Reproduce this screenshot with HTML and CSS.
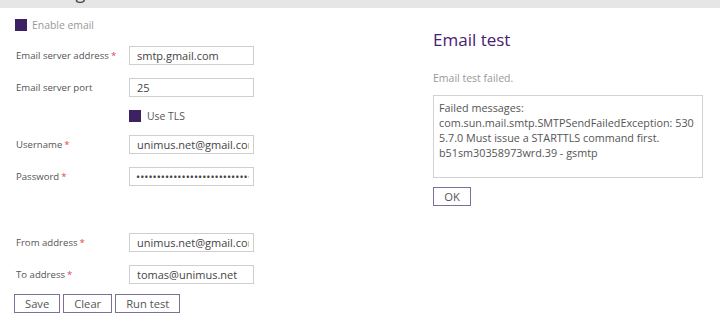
FILE: index.html
```html
<!DOCTYPE html>
<html lang="en">
<head>
  <meta charset="UTF-8" />
  <meta name="viewport" content="width=device-width, initial-scale=1.0" />
  <title>Email settings</title>
  <link rel="stylesheet" href="styles.css">
</head>
<body>
  <div class="topbar">
    <span class="page-title">Settings</span>
  </div>

  <div class="container">
    <div class="settings">
      <div class="check-row enable">
        <span class="checkbox"></span>
        <span class="check-label muted">Enable email</span>
      </div>

      <div class="field">
        <label for="server">Email server address<span class="req">*</span></label>
        <input id="server" type="text" value="smtp.gmail.com" />
      </div>
      <div class="field">
        <label for="port">Email server port</label>
        <input id="port" type="text" value="25" />
      </div>
      <div class="check-row tls">
        <span class="checkbox"></span>
        <span class="check-label">Use TLS</span>
      </div>
      <div class="field">
        <label for="username">Username<span class="req">*</span></label>
        <input id="username" type="text" value="unimus.net@gmail.com" />
      </div>
      <div class="field">
        <label for="password">Password<span class="req">*</span></label>
        <input id="password" type="password" value="abcdefghijklmnopqrstuvwxyzabcdefghijklmn" />
      </div>

      <div class="spacer"></div>

      <div class="field">
        <label for="from">From address<span class="req">*</span></label>
        <input id="from" type="text" value="unimus.net@gmail.com" />
      </div>
      <div class="field">
        <label for="to">To address<span class="req">*</span></label>
        <input id="to" type="text" value="tomas@unimus.net" />
      </div>

      <div class="buttons">
        <button>Save</button>
        <button>Clear</button>
        <button>Run test</button>
      </div>
    </div>

    <div class="test">
      <h2>Email test</h2>
      <p class="muted status">Email test failed.</p>
      <div class="log">Failed messages:
com.sun.mail.smtp.SMTPSendFailedException: 530
5.7.0 Must issue a STARTTLS command first.
b51sm30358973wrd.39 - gsmtp</div>
      <button class="ok">OK</button>
    </div>
  </div>
</body>
</html>
```

FILE: styles.css
```css
body { margin: 0; font-family: "Open Sans", "Liberation Sans", sans-serif; color: #555; background: #fff; }

/* grey bar at the top, the title is mostly scrolled away */
.topbar { height: 8px; background: #e6e6e6; overflow: hidden; padding-left: 27px; }
.page-title { display: block; font-size: 18px; line-height: 18px; margin-top: -17px; color: #444; }

.container { display: flex; }
.settings { width: 260px; padding-left: 15px; }
.test { width: 270px; margin-left: 158px; }

.muted { color: #999; }

.check-row { display: flex; align-items: center; }
.check-row.enable { height: 12px; margin-top: 11px; margin-bottom: 8px; }
.check-row.tls { height: 25px; padding-left: 114px; }
.checkbox { width: 12px; height: 12px; background: #3c2262; }
.check-label { font-size: 10.4px; margin-left: 5px; }
.check-row.tls .check-label { margin-left: 6px; }

.field { display: flex; align-items: center; height: 32px; }
.field label { width: 113px; padding-left: 1px; font-size: 9.6px; color: #555; }
.req { color: #e0474c; margin-left: 2px; }
.field input {
  width: 125px; height: 19px; box-sizing: border-box;
  border: 1px solid #cfcfcf; padding: 0 4px 0 7px;
  font-family: inherit; font-size: 11px; color: #444;
  outline: none;
}
.field input[type="password"] { padding-left: 6px; }

.spacer { height: 34px; }

button {
  height: 19px; padding: 0 10px; box-sizing: border-box;
  border: 1px solid #7d6f9c; background: #fff;
  font-family: inherit; font-size: 11.2px; color: #555;
  line-height: 17px;
}
.buttons { display: flex; gap: 3px; margin-top: 4px; margin-left: -1px; }

.test h2 { margin: 20px 0 0; font-size: 17px; font-weight: 400; color: #4a2070; line-height: 24px; }
.status { margin: 19px 0 0; font-size: 10.5px; line-height: 14px; }
.log {
  margin-top: 10px; height: 83px; box-sizing: border-box;
  border: 1px solid #d2d2d2; padding: 4px 5px;
  font-size: 10.8px; line-height: 15px; color: #555;
  white-space: pre;
}
.ok { margin-top: 9px; width: 38px; padding: 0; }
```
